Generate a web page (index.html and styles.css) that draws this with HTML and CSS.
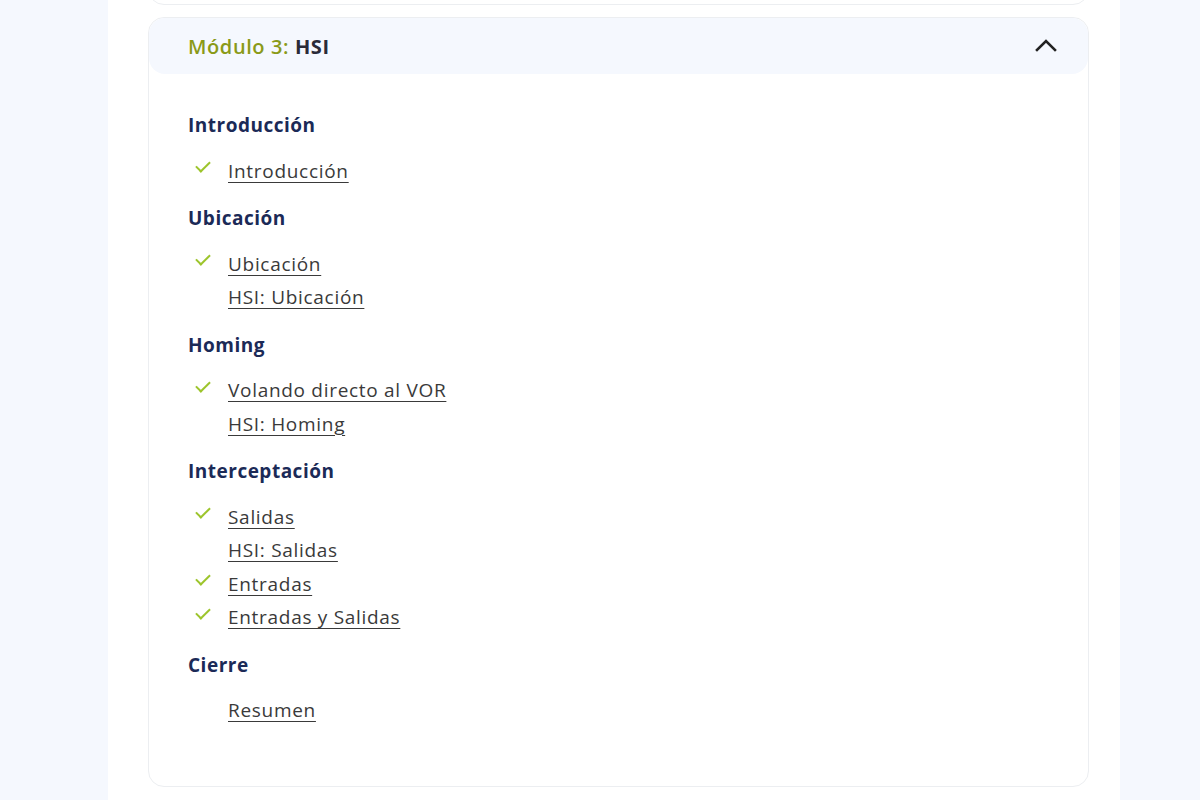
FILE: index.html
```html
<!DOCTYPE html>
<html lang="es">
<head>
    <meta charset="UTF-8">
    <meta name="viewport" content="width=device-width, initial-scale=1.0">
    <title>Módulo 3: HSI</title>
    <link rel="stylesheet" href="styles.css">
</head>
<body>

    <div class="page">
        <div class="module-card module-card-prev"></div>

        <div class="module-card">
            <div class="module-header">
                <h2 class="module-title"><span class="module-num">Módulo 3:</span> <b>HSI</b></h2>
                <svg class="chevron" width="22" height="14" viewBox="0 0 22 14" fill="none">
                    <path d="M2 12L11 3L20 12" stroke="#222" stroke-width="2.6" stroke-linecap="square"/>
                </svg>
            </div>

            <div class="module-body">
                <div class="section">
                    <h3 class="section-title">Introducción</h3>
                    <ul class="lessons">
                        <li class="done"><span class="check"></span><a href="#">Introducción</a></li>
                    </ul>
                </div>

                <div class="section">
                    <h3 class="section-title">Ubicación</h3>
                    <ul class="lessons">
                        <li class="done"><span class="check"></span><a href="#">Ubicación</a></li>
                        <li><span class="check"></span><a href="#">HSI: Ubicación</a></li>
                    </ul>
                </div>

                <div class="section">
                    <h3 class="section-title">Homing</h3>
                    <ul class="lessons">
                        <li class="done"><span class="check"></span><a href="#">Volando directo al VOR</a></li>
                        <li><span class="check"></span><a href="#">HSI: Homing</a></li>
                    </ul>
                </div>

                <div class="section">
                    <h3 class="section-title">Interceptación</h3>
                    <ul class="lessons">
                        <li class="done"><span class="check"></span><a href="#">Salidas</a></li>
                        <li><span class="check"></span><a href="#">HSI: Salidas</a></li>
                        <li class="done"><span class="check"></span><a href="#">Entradas</a></li>
                        <li class="done"><span class="check"></span><a href="#">Entradas y Salidas</a></li>
                    </ul>
                </div>

                <div class="section">
                    <h3 class="section-title">Cierre</h3>
                    <ul class="lessons">
                        <li><span class="check"></span><a href="#">Resumen</a></li>
                    </ul>
                </div>
            </div>
        </div>
    </div>

</body>
</html>
```

FILE: styles.css
```css
body {
    margin: 0;
    padding: 0;
    font-family: "Open Sans", "Noto Sans", sans-serif;
    background-color: #f5f8fe;
    color: #333;
}

.page {
    width: 1012px;
    margin-left: 108px;
    padding: 0 31px 0 40px;
    box-sizing: border-box;
    background-color: #fff;
    min-height: 800px;
    overflow: hidden;
}

.module-card {
    border: 1px solid #eceef1;
    border-radius: 16px;
    background-color: #fff;
    margin-bottom: 12px;
}

.module-card-prev {
    height: 40px;
    margin-top: -37px;
}

.module-header {
    display: flex;
    align-items: center;
    justify-content: space-between;
    height: 56px;
    padding: 0 31px 0 39px;
    background-color: #f5f8fe;
    border-radius: 16px;
}

.module-title {
    margin: 0;
    font-size: 20px;
    font-weight: 600;
    letter-spacing: 0.6px;
    color: #2a2b38;
}

.module-title b {
    font-weight: 700;
}

.module-num {
    color: #8a9a18;
}

.chevron {
    display: block;
    margin-top: -3px;
}

.module-body {
    padding: 37px 39px 59px;
}

.section + .section {
    margin-top: 16.5px;
}

.section-title {
    margin: 0 0 15px;
    font-size: 19px;
    line-height: 28px;
    font-weight: 700;
    letter-spacing: 0.5px;
    color: #1b2a57;
}

.lessons {
    list-style: none;
    margin: 0;
    padding: 0;
}

.lessons li {
    display: flex;
    align-items: center;
    height: 33.5px;
}

.check {
    width: 40px;
    height: 33px;
    position: relative;
    flex-shrink: 0;
}

.done .check::after {
    content: "";
    position: absolute;
    left: 11px;
    top: 4px;
    width: 6px;
    height: 12px;
    border-right: 2px solid #9dc52c;
    border-bottom: 2px solid #9dc52c;
    transform: rotate(45deg);
}

.lessons a {
    font-size: 19px;
    letter-spacing: 0.7px;
    color: #3a3a3a;
    text-decoration: underline;
    text-underline-offset: 4px;
    text-decoration-thickness: 1px;
}
```
